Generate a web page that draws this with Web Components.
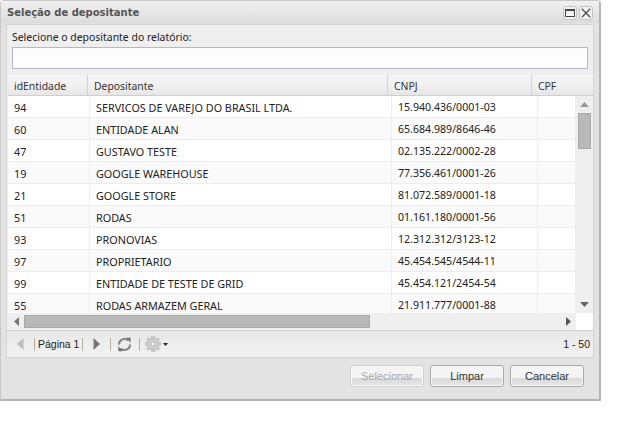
<!DOCTYPE html>
<html lang="pt"><head><meta charset="utf-8"><title>Seleção de depositante</title>
<style>html,body{margin:0;padding:0;background:#fff;font:11px "Liberation Sans",Arial,sans-serif}</style></head>
<body>
<dlg-window>
  <dlg-title slot="title">Seleção de depositante</dlg-title>
  <dlg-filter label="Selecione o depositante do relatório:"></dlg-filter>
  <dlg-grid></dlg-grid>
  <dlg-pager></dlg-pager>
  <dlg-btn slot="footer" disabled>Selecionar</dlg-btn>
  <dlg-btn slot="footer">Limpar</dlg-btn>
  <dlg-btn slot="footer">Cancelar</dlg-btn>
</dlg-window>
<script>
const def=(n,html)=>customElements.define(n,class extends HTMLElement{constructor(){super();this.attachShadow({mode:'open'}).innerHTML=html(this);}});
def('dlg-window',()=>`<style>
:host{width:601px;height:401px;box-sizing:border-box;border-style:solid;border-width:1px 2px 2px 1px;border-color:#c8c8c8 #b4b4b4 #b4b4b4 #c8c8c8;border-radius:4px 4px 0 0;background:#e3e3e3;display:flex;flex-direction:column}
header{height:22px;flex:none;display:flex;align-items:center;justify-content:space-between;padding:0 6px 0 6px;background:linear-gradient(#f0f0f0,#dcdcdc)}
.tools{display:flex;gap:2px;margin-top:2px}
.tools span{width:12px;height:12px;border:1px solid #c4c4c4;border-radius:3px;background:#f3f3f3;display:flex;align-items:center;justify-content:center}
main{flex:none;height:334px;margin:1px 5px 0 5px;border:1px solid #d5d5d5;background:#efefef;display:flex;flex-direction:column;box-sizing:border-box}
footer{flex:1;display:flex;justify-content:flex-end;gap:6px;padding:7px 15px 0 0}
</style>
<header><slot name="title"></slot><div class="tools">
<span><svg width="10" height="8" viewBox="0 0 10 8"><rect x=".5" y=".5" width="9" height="7" fill="#f4f4f4" stroke="#444"/><rect width="10" height="2" fill="#444"/></svg></span>
<span><svg width="10" height="10" viewBox="0 0 10 10"><path d="M.8 .8l8.4 8.4M9.2 .8L.8 9.2" stroke="#555" stroke-width="1.4" fill="none"/></svg></span>
</div></header>
<main><slot></slot></main>
<footer><slot name="footer"></slot></footer>`);
def('dlg-title',()=>`<style>:host{display:block;font:bold 10px "DejaVu Sans",Verdana,sans-serif;color:#555}</style><slot></slot>`);
def('dlg-filter',h=>`<style>:host{display:block;flex:none;height:50px;box-sizing:border-box;padding:5px 5px 0 5px}
label{display:block;font:10.45px "Noto Sans",sans-serif;line-height:14px;color:#222}
input{display:block;box-sizing:border-box;width:576px;height:22px;margin:3px 0 0;border:1px solid #b4b8cd;background:linear-gradient(#fbfbfb,#fff);padding:0;outline:0}
</style><label>${h.getAttribute('label')}</label><input type="text" aria-label="${h.getAttribute('label')}">`);
const rows=[[94,'SERVICOS DE VAREJO DO BRASIL LTDA.','15.940.436/0001-03'],[60,'ENTIDADE ALAN','65.684.989/8646-46'],[47,'GUSTAVO TESTE','02.135.222/0002-28'],[19,'GOOGLE WAREHOUSE','77.356.461/0001-26'],[21,'GOOGLE STORE','81.072.589/0001-18'],[51,'RODAS','01.161.180/0001-56'],[93,'PRONOVIAS','12.312.312/3123-12'],[97,'PROPRIETARIO','45.454.545/4544-11'],[99,'ENTIDADE DE TESTE DE GRID','45.454.121/2454-54'],[55,'RODAS ARMAZEM GERAL','21.911.777/0001-88']];
def('dlg-grid',()=>`<style>
:host{display:block;flex:none;margin-left:1px;height:255px;overflow:hidden;font:10.8px "Noto Sans",sans-serif;color:#222;background:#fff}
.head{display:flex;height:21px;background:linear-gradient(#f5f5f5 0,#f1f1f1 50%,#e6e6e6 100%);border-bottom:1px solid #cfcfcf;box-sizing:border-box;line-height:22px;font-size:10.4px}
.head div{box-sizing:border-box;padding-left:6px;border-right:1px solid #d3d3d3;color:#333}
.body{display:flex;height:217px}
.rows{width:568px;flex:none;overflow:hidden;background:#fff}
.row{display:flex;height:22px;box-sizing:border-box;border-bottom:1px solid #ededed;line-height:23px;background:#fff}
.row:nth-child(even){background:#fafafa}
.row div{box-sizing:border-box;border-right:1px solid #ededed;white-space:nowrap;overflow:hidden}
.a{width:82px;padding-left:6px}.b{width:302px;padding-left:6px}.c{width:146px;padding-left:6px;font-size:10.6px}.d{width:38px}
.vbar{width:17px;flex:none;background:#efefef;display:flex;flex-direction:column;align-items:center}
.arr{height:17px;display:flex;align-items:center;justify-content:center;flex:none}
.thumbv{width:13px;height:36px;background:#b9b9b9;border:1px solid #a9a9a9;box-sizing:border-box}
.sp{flex:1}
.hbar{display:flex;height:17px;width:568px;background:#efefef;align-items:center}
.thumbh{width:346px;height:13px;background:#b9b9b9;border:1px solid #a9a9a9;box-sizing:border-box}
</style>
<div class="head"><div style="width:80px">idEntidade</div><div style="width:300px">Depositante</div><div style="width:144px">CNPJ</div><div style="flex:1;border:0">CPF</div></div>
<div class="body"><div class="rows">${rows.map(r=>`<div class="row"><div class="a">${r[0]}</div><div class="b">${r[1]}</div><div class="c">${r[2]}</div><div class="d"></div></div>`).join('')}</div>
<div class="vbar"><div class="arr"><svg width="9" height="5"><path d="M0 5L4.5 0 9 5z" fill="#999"/></svg></div><div class="thumbv"></div><div class="sp"></div><div class="arr"><svg width="9" height="5"><path d="M0 0h9L4.5 5z" fill="#666"/></svg></div></div></div>
<div class="hbar"><div class="arr" style="width:16px"><svg width="5" height="9"><path d="M5 0v9L0 4.5z" fill="#777"/></svg></div><div class="thumbh"></div><div class="sp"></div><div class="arr" style="width:16px"><svg width="5" height="9"><path d="M0 0v9l5-4.5z" fill="#555"/></svg></div></div>`);
const gearTeeth=[0,45,90,135,180,225,270,315].map(a=>`<rect x="6.4" y="0" width="3.2" height="3.6" rx=".6" fill="#d0d0d0" stroke="#a8a8a8" stroke-width=".5" transform="rotate(${a} 8 8)"/>`).join('');
def('dlg-pager',()=>`<style>
:host{display:flex;flex:1;align-items:center;box-sizing:border-box;border-top:1px solid #cfcfcf;background:linear-gradient(#e8e8e8,#f2f2f2);padding:0 3px 0 10px;font:10.5px "Liberation Sans",Arial,sans-serif;color:#222}
i{display:block;width:1px;height:13px;background:#b5b09f;flex:none}
.sp{flex:1}
svg{flex:none;display:block}
</style>
<svg width="7" height="12" style="margin-right:10px"><path d="M6.5 0v12L0 6z" fill="#bcbcbc"/></svg><i></i><span style="margin:0 3px 0 3px">Página 1</span><i></i>
<svg width="7" height="12" style="margin:0 10px 0 10px"><path d="M.5 0v12L7 6z" fill="#777"/></svg><i></i>
<svg width="15" height="15" viewBox="0 0 15 15" style="margin:0 7px 0 6px"><g fill="none" stroke="#6f6f6f" stroke-width="2"><path d="M2 7.5A5.5 5.5 0 0 1 11 3.4"/><path d="M13 7.5A5.5 5.5 0 0 1 4 11.6"/></g><path d="M9 .8h4.6v5z" fill="#6f6f6f"/><path d="M6 14.2H1.4v-5z" fill="#6f6f6f"/><g fill="none" stroke="#d5d5d5" stroke-width=".7"><path d="M2.5 7.3A5 5 0 0 1 10.5 3.8"/><path d="M12.5 7.7A5 5 0 0 1 4.5 11.2"/></g></svg><i></i>
<svg width="16" height="16" viewBox="0 0 16 16" style="margin:0 2px 0 5px">${gearTeeth}<circle cx="8" cy="8" r="5.2" fill="#d6d6d6" stroke="#a8a8a8" stroke-width=".7"/><circle cx="8" cy="8" r="2.3" fill="#f2f2f2" stroke="#999" stroke-width=".8"/></svg>
<svg width="5" height="3"><path d="M0 0h5L2.5 3z" fill="#222"/></svg>
<div class="sp"></div><span>1 - 50</span>`);
def('dlg-btn',h=>`<style>
:host{display:block;width:74px;height:22px;box-sizing:border-box;border:1px solid ${h.hasAttribute('disabled')?'#d0d0d0':'#a9a9a9'};border-radius:3px;box-shadow:inset 0 0 0 1px #f8f8f8;background:linear-gradient(#f4f4f4 0,#f4f4f4 58%,#d9d9d9 60%,#e6e6e6 100%);text-align:center;font:11px "Liberation Sans",Arial,sans-serif;line-height:20px;color:${h.hasAttribute('disabled')?'#a8a8a8':'#333'}}
</style><slot></slot>`);
</script></body></html>
